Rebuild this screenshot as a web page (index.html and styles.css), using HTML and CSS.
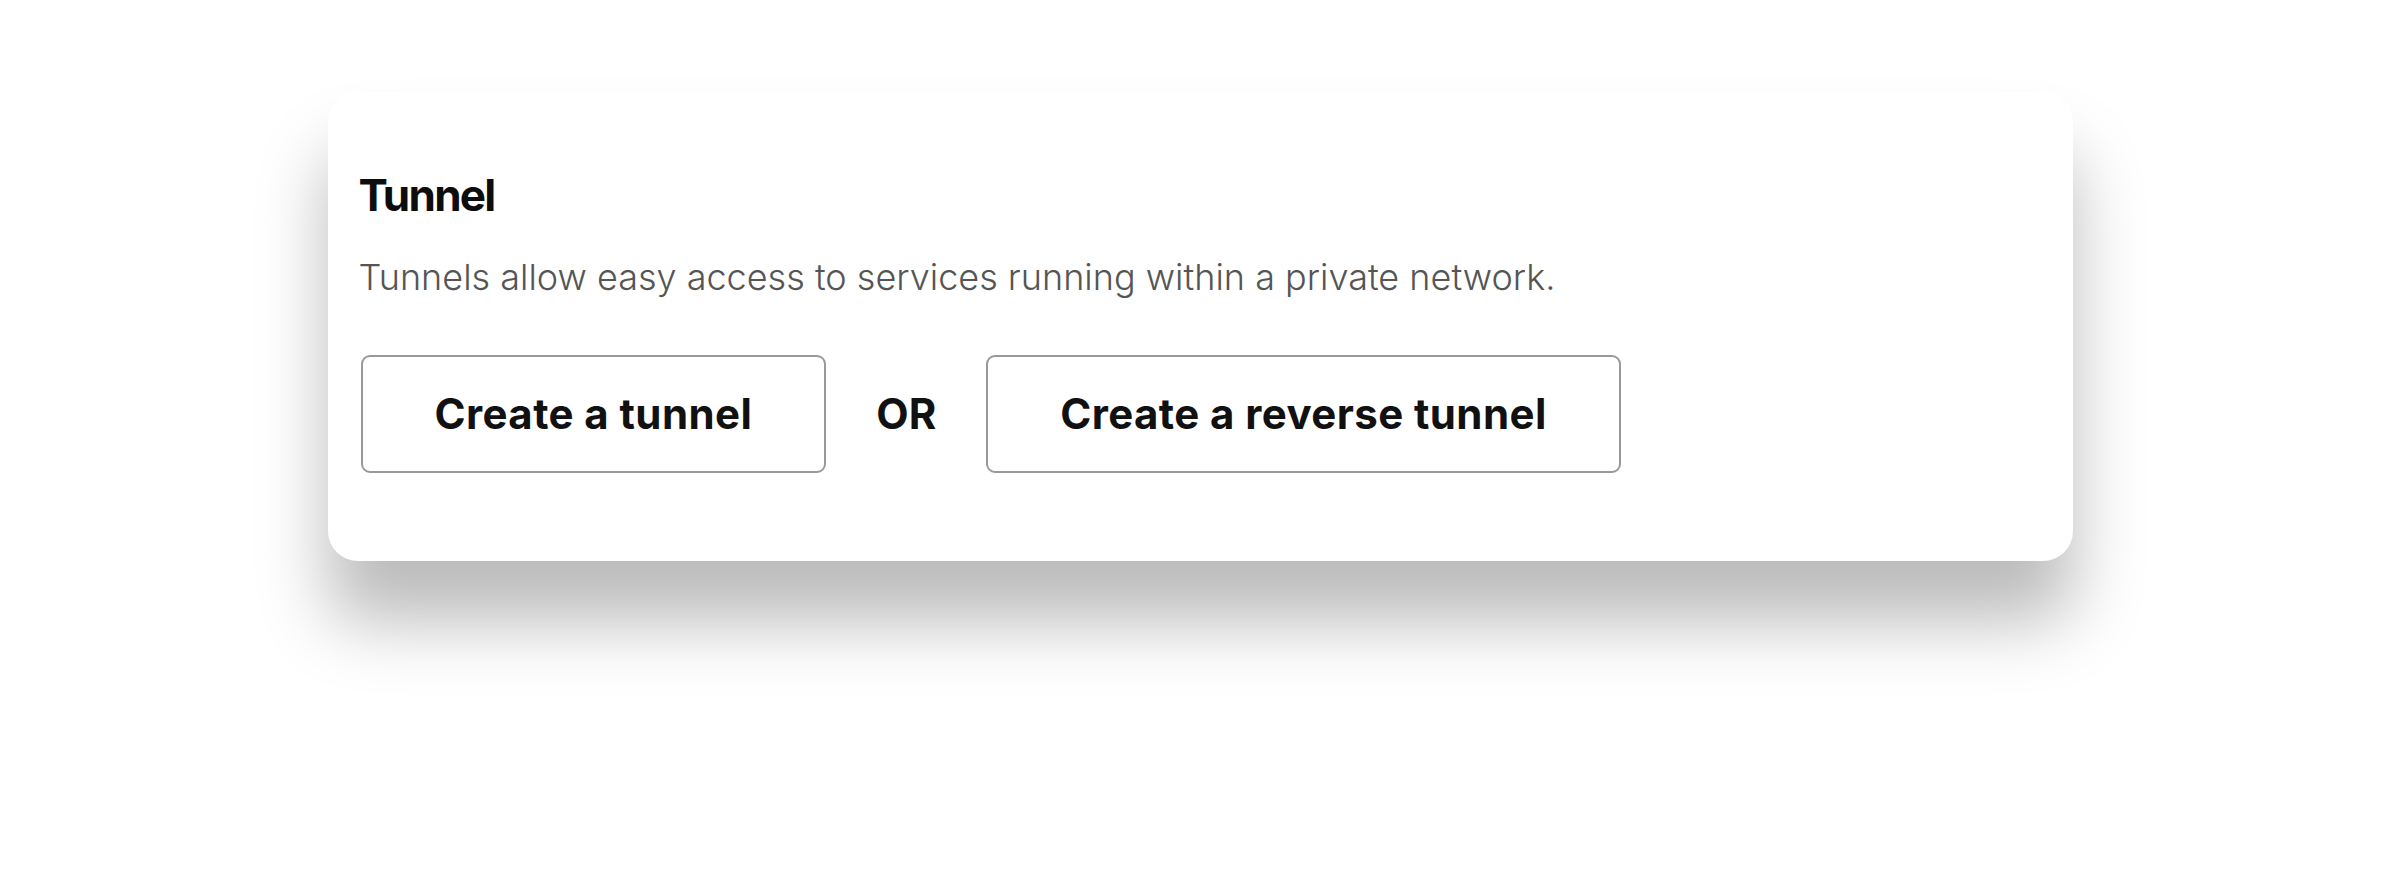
FILE: index.html
```html
<!DOCTYPE html>
<html lang="en">
<head>
  <meta charset="UTF-8">
  <meta name="viewport" content="width=device-width, initial-scale=1.0">
  <title>Tunnel</title>
  <link rel="stylesheet" href="styles.css">
</head>
<body>

  <!-- Tunnel panel -->
  <div class="tunnel-card">
    <h2>Tunnel</h2>
    <p>Tunnels allow easy access to services running within a private network.</p>

    <div class="tunnel-actions">
      <button class="tunnel-btn">Create a tunnel</button>
      <span class="or-label">OR</span>
      <button class="tunnel-btn">Create a reverse tunnel</button>
    </div>
  </div>

</body>
</html>
```

FILE: styles.css
```css
body {
  font-family: Inter, "Noto Sans", sans-serif;
  background-color: #fff;
  margin: 0;
  padding: 0;
  min-height: 100vh;
}

.tunnel-card {
  width: 1745px;
  box-sizing: border-box;
  margin: 92px auto 0;
  padding: 77px 32px 88px 31px;
  background-color: #fff;
  border-radius: 30px;
  box-shadow: 0 60px 70px rgba(0, 0, 0, 0.27);
}

h2 {
  font-size: 44px;
  font-weight: 700;
  line-height: 1.2;
  color: #0d0d0d;
  letter-spacing: -0.04em;
  margin: 0 0 34px;
}

p {
  font-size: 36px;
  font-weight: 300;
  line-height: 1.2;
  color: #555;
  margin: 0 0 56px;
}

.tunnel-actions {
  display: flex;
  align-items: center;
  gap: 50px; /* space around the OR */
  margin-left: 2px;
}

.tunnel-btn {
  font-family: inherit;
  font-size: 42px;
  font-weight: 700;
  line-height: 1.2;
  letter-spacing: 0.01em;
  color: #111;
  background-color: #fff;
  border: 2px solid #999;
  border-radius: 9px;
  height: 118px;
  padding: 0 72px;
  cursor: pointer;
}

.or-label {
  font-size: 42px;
  font-weight: 700;
  color: #111;
}
```
